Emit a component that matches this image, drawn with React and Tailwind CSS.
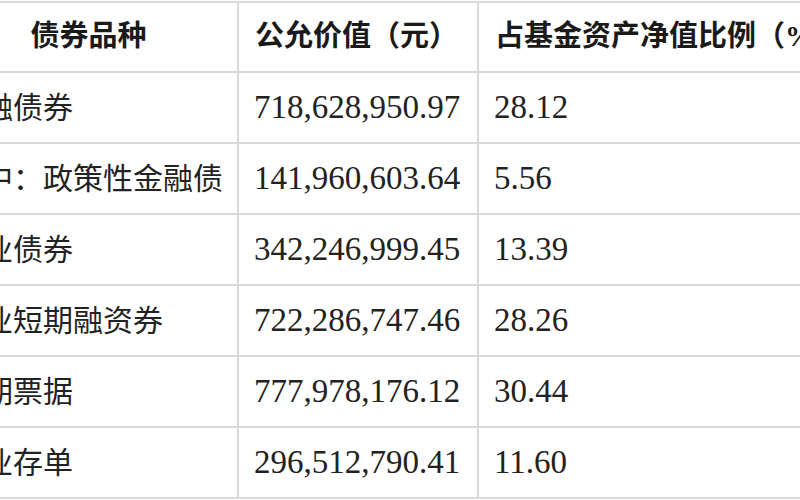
const ROWS = [
  { name: '金融债券',             value: '718,628,950.97', pct: '28.12' },
  { name: '其中：政策性金融债',   value: '141,960,603.64', pct: '5.56' },
  { name: '企业债券',             value: '342,246,999.45', pct: '13.39' },
  { name: '企业短期融资券',       value: '722,286,747.46', pct: '28.26' },
  { name: '中期票据',             value: '777,978,176.12', pct: '30.44' },
  { name: '同业存单',             value: '296,512,790.41', pct: '11.60' },
]

const cjk = "font-['Liberation_Serif','Noto_Sans_CJK_SC',serif]"
const num = "font-['Liberation_Serif',serif]"

export default function App() {
  return (
    <div className="w-[800px] h-[500px] bg-white overflow-hidden">
      {/* table is cropped on the left, so it starts off-canvas */}
      <div className="ml-[-60px] mt-[1px] w-[940px] bg-[#d9d9d9] pt-[2px] pb-[2px] grid grid-cols-[297px_238px_401px] gap-[2px]">
        <div className={`bg-white h-[68px] flex items-center justify-center ${cjk} text-[29px] font-bold text-[#1a1a1a]`}>
          债券品种
        </div>
        <div className={`bg-white h-[68px] flex items-center pl-[16px] ${cjk} text-[29px] font-bold text-[#1a1a1a] whitespace-nowrap`}>
          公允价值（元）
        </div>
        <div className={`bg-white h-[68px] flex items-center pl-[16px] ${cjk} text-[29px] font-bold text-[#1a1a1a] whitespace-nowrap`}>
          占基金资产净值比例（%）
        </div>

        {ROWS.map(r => (
          <Row key={r.name} {...r} />
        ))}
      </div>
    </div>
  )
}

function Row({ name, value, pct }) {
  return (
    <>
      <div className={`bg-white h-[69px] flex items-center pl-[13px] ${cjk} text-[30px] text-[#222] whitespace-nowrap`}>
        {name}
      </div>
      <div className={`bg-white h-[69px] flex items-center pl-[15px] ${num} text-[33px] text-[#222]`}>
        {value}
      </div>
      <div className={`bg-white h-[69px] flex items-center pl-[15px] ${num} text-[33px] text-[#222]`}>
        {pct}
      </div>
    </>
  )
}
